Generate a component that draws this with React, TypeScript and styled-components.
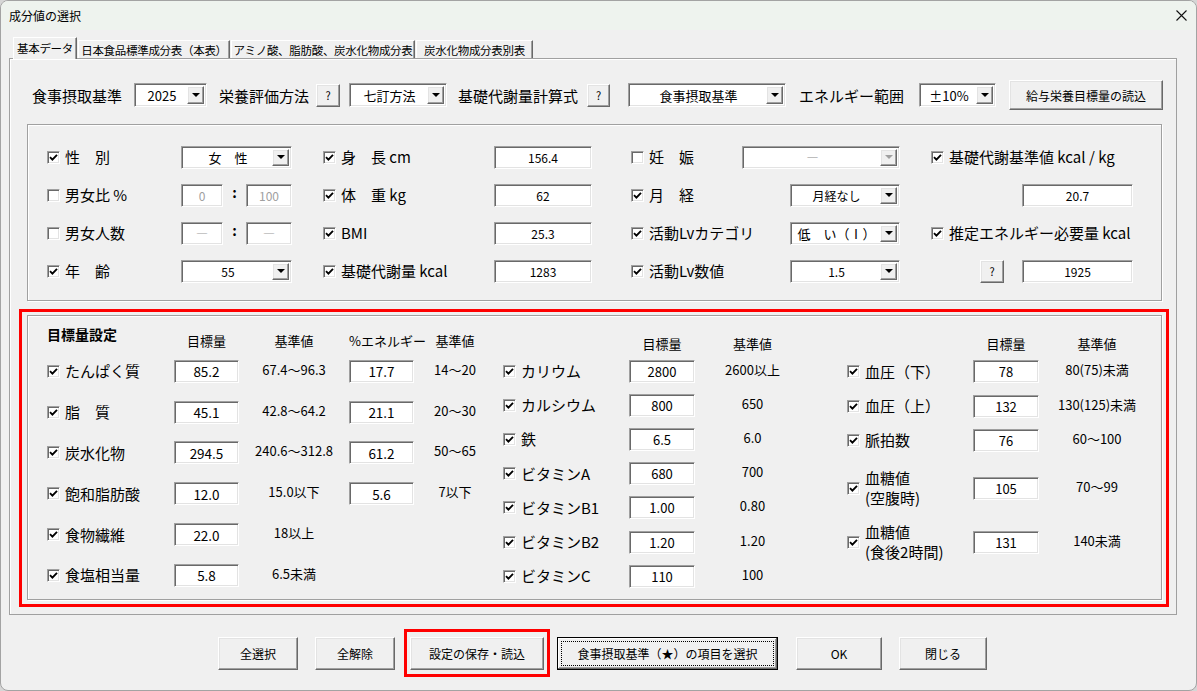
import React from "react";
import styled, { createGlobalStyle, css } from "styled-components";

const GlobalStyle = createGlobalStyle`
  html, body {
    margin: 0;
    padding: 0;
    background: #d6d6d6;
  }
  body {
    font-family: "Noto Sans CJK JP", "Noto Sans", sans-serif;
    color: #000;
  }
  * {
    box-sizing: border-box;
  }
`;

const raised = css`
  background: #f0f0f0;
  border: 1px solid;
  border-color: #fff #696969 #696969 #fff;
  box-shadow: inset -1px -1px 0 #a0a0a0, inset 1px 1px 0 #e3e3e3;
`;

const sunken = css`
  background: #fff;
  border: 1px solid;
  border-color: #a0a0a0 #fff #fff #a0a0a0;
  box-shadow: inset 1px 1px 0 #696969, inset -1px -1px 0 #e3e3e3;
`;

const Window = styled.div`
  width: 1197px;
  height: 691px;
  background: #f0f0f0;
  border: 1px solid #a3a3a3;
  border-radius: 8px;
  overflow: hidden;
  display: flex;
  flex-direction: column;
`;

const TitleBar = styled.div`
  height: 29px;
  flex: none;
  background: #eef3ee;
  display: flex;
  align-items: center;
  justify-content: space-between;
  padding: 0 9px 0 8px;
  font-size: 12px;
`;

const Body = styled.div`
  padding: 7px 0 0 8px;
  display: flex;
  flex-direction: column;
`;

const TabStrip = styled.div`
  display: flex;
  align-items: flex-end;
  height: 21px;
  padding-left: 4px;
  position: relative;
  z-index: 1;
`;

const Tab = styled.div<{ $w: number; $active?: boolean }>`
  width: ${(p) => p.$w}px;
  height: ${(p) => (p.$active ? 22 : 18)}px;
  margin-bottom: ${(p) => (p.$active ? -1 : 0)}px;
  margin-right: 1px;
  display: flex;
  align-items: center;
  justify-content: center;
  padding-bottom: ${(p) => (p.$active ? 2 : 0)}px;
  font-size: 11.5px;
  letter-spacing: -0.3px;
  white-space: nowrap;
  background: #f0f0f0;
  border-top: 1px solid #fff;
  border-left: 1px solid #fff;
  border-right: 1px solid #696969;
  box-shadow: inset -1px 0 0 #a0a0a0;
`;

const TabPage = styled.div`
  width: 1168px;
  height: 557px;
  border: 1px solid #a0a0a0;
  box-shadow: inset 1px 1px 0 #fff;
  display: flex;
  flex-direction: column;
`;

const TopRow = styled.div`
  margin-top: 21px;
  padding-left: 22px;
  height: 30px;
  display: flex;
  align-items: center;
`;

const RowLabel = styled.div<{ $w: number; $ml?: number }>`
  width: ${(p) => p.$w}px;
  margin-left: ${(p) => p.$ml || 0}px;
  font-size: 15px;
  white-space: nowrap;
`;

const ComboBox = styled.div<{ $w?: number; $ml?: number; $h?: number; $col?: string; $fs?: number }>`
  ${sunken};
  width: ${(p) => (p.$w ? `${p.$w}px` : "auto")};
  height: ${(p) => p.$h || 23}px;
  margin-left: ${(p) => p.$ml || 0}px;
  grid-column: ${(p) => p.$col || "auto"};
  display: flex;
  align-items: stretch;
  padding: 2px;
  font-size: ${(p) => p.$fs || 12}px;
`;

const ComboText = styled.div<{ $off?: boolean }>`
  flex: 1;
  display: flex;
  align-items: center;
  justify-content: center;
  color: ${(p) => (p.$off ? "#8a8a8a" : "#000")};
  white-space: nowrap;
`;

const ComboArrow = styled.div<{ $off?: boolean }>`
  ${raised};
  width: 17px;
  flex: none;
  display: flex;
  align-items: center;
  justify-content: center;

  &::after {
    content: "";
    border-left: 4px solid transparent;
    border-right: 4px solid transparent;
    border-top: 4px solid ${(p) => (p.$off ? "#a0a0a0" : "#000")};
  }
`;

const Field = styled.div<{ $w?: number; $col?: string; $fs?: number; $off?: boolean }>`
  ${sunken};
  width: ${(p) => (p.$w ? `${p.$w}px` : "auto")};
  height: 23px;
  grid-column: ${(p) => p.$col || "auto"};
  display: flex;
  align-items: center;
  justify-content: center;
  font-size: ${(p) => p.$fs || 12}px;
  color: ${(p) => (p.$off ? "#a0a0a0" : "#000")};
`;

const Button = styled.div<{ $w: number; $h?: number; $ml?: number; $fs?: number }>`
  ${raised};
  width: ${(p) => p.$w}px;
  height: ${(p) => p.$h || 33}px;
  margin-left: ${(p) => p.$ml || 0}px;
  flex: none;
  display: flex;
  align-items: center;
  justify-content: center;
  font-size: ${(p) => p.$fs || 12}px;
  white-space: nowrap;
`;

const HelpButton = styled(Button)<{ $col?: string; $mr?: number }>`
  grid-column: ${(p) => p.$col || "auto"};
  justify-self: end;
  margin-right: ${(p) => p.$mr || 0}px;
  font-size: 11px;
`;

const DefaultButton = styled(Button)`
  border-color: #000;
  box-shadow: inset -1px -1px 0 #696969, inset 1px 1px 0 #fff, inset -2px -2px 0 #a0a0a0;
  padding: 3px;
`;

const Focus = styled.div`
  width: 100%;
  height: 100%;
  border: 1px dotted #000;
  display: flex;
  align-items: center;
  justify-content: center;
`;

const Panel = styled.div`
  width: 1135px;
  border: 1px solid #a0a0a0;
  box-shadow: inset 1px 1px 0 #fff, 1px 1px 0 #fff;
`;

const BasicPanel = styled(Panel)`
  margin: 14px 0 0 17px;
  height: 177px;
  padding: 13px 0 0 19px;
  display: grid;
  grid-template-columns: 134px 111px 31px 171px 98px 39px 111px 48px 110px 31px 91px 111px;
  grid-template-rows: repeat(4, 38px);
  align-items: center;
`;

const CheckRow = styled.div<{ $col?: string }>`
  grid-column: ${(p) => p.$col || "auto"};
  display: flex;
  align-items: center;
  gap: 5px;
  font-size: 15px;
  line-height: 20px;
  white-space: nowrap;
`;

const CheckBox = styled.div`
  ${sunken};
  width: 13px;
  height: 13px;
  flex: none;
  display: flex;
  align-items: center;
  justify-content: center;
`;

const Pair = styled.div<{ $col: string }>`
  grid-column: ${(p) => p.$col};
  display: flex;
  align-items: center;
  font-size: 14px;
`;

const Colon = styled.div`
  width: 23px;
  text-align: center;
  margin-top: -6px;
  font-weight: bold;
`;

const RedFrame = styled.div<{ $ml?: number }>`
  border: 3px solid #f00;
  margin-left: ${(p) => p.$ml || 0}px;
  flex: none;
`;

const TargetFrame = styled(RedFrame)`
  margin-top: 8px;
  width: 1150px;
  height: 298px;
  padding: 3px 4px 4px 5px;
`;

const TargetPanel = styled(Panel)`
  height: 285px;
  display: flex;
  align-items: flex-start;
  padding: 8px 0 0 19px;
`;

const Section = styled.div<{ $cols: string; $rows: string; $ml?: number }>`
  margin-left: ${(p) => p.$ml || 0}px;
  display: grid;
  grid-template-columns: ${(p) => p.$cols};
  grid-template-rows: ${(p) => p.$rows};
  align-items: center;
`;

const SectionTitle = styled.div`
  grid-column: 1;
  align-self: start;
  margin-top: 3px;
  font-size: 14px;
  font-weight: bold;
  line-height: 15px;
`;

const ColHead = styled.div<{ $col: number }>`
  grid-column: ${(p) => p.$col};
  align-self: end;
  padding-bottom: 3px;
  text-align: center;
  font-size: 13px;
  line-height: 14px;
  white-space: nowrap;
`;

const RefValue = styled.div`
  text-align: center;
  font-size: 13px;
  margin-top: -4px;
  white-space: nowrap;
`;

const TwoLine = styled.div`
  display: flex;
  flex-direction: column;
  line-height: 20px;
`;

const ButtonRow = styled.div`
  margin-top: 14px;
  height: 48px;
  display: flex;
  align-items: center;
`;

const SaveFrame = styled(RedFrame)`
  padding: 4px 3px;
  height: 48px;
  display: flex;
  align-items: center;
`;

const Tick = () => (
  <svg width="9" height="9" viewBox="0 0 9 9">
    <path d="M1 4.2 L3.4 6.6 L8 1.8" stroke="#000" strokeWidth="1.9" fill="none" />
  </svg>
);

function Check({
  label,
  on = true,
  col,
}: {
  label: React.ReactNode;
  on?: boolean;
  col?: string;
}) {
  return (
    <CheckRow $col={col}>
      <CheckBox>{on && <Tick />}</CheckBox>
      <span>{label}</span>
    </CheckRow>
  );
}

function Combo({
  value,
  w,
  ml,
  h,
  col,
  fs,
  off,
}: {
  value: string;
  w?: number;
  ml?: number;
  h?: number;
  col?: string;
  fs?: number;
  off?: boolean;
}) {
  return (
    <ComboBox $w={w} $ml={ml} $h={h} $col={col} $fs={fs}>
      <ComboText $off={off}>{value}</ComboText>
      <ComboArrow $off={off} />
    </ComboBox>
  );
}

const leftRows = [
  { label: "たんぱく質", v: "85.2", ref: "67.4～96.3", e: "17.7", eref: "14～20" },
  { label: "脂　質", v: "45.1", ref: "42.8～64.2", e: "21.1", eref: "20～30" },
  { label: "炭水化物", v: "294.5", ref: "240.6～312.8", e: "61.2", eref: "50～65" },
  { label: "飽和脂肪酸", v: "12.0", ref: "15.0以下", e: "5.6", eref: "7以下" },
  { label: "食物繊維", v: "22.0", ref: "18以上" },
  { label: "食塩相当量", v: "5.8", ref: "6.5未満" },
];

const midRows = [
  { label: "カリウム", v: "2800", ref: "2600以上" },
  { label: "カルシウム", v: "800", ref: "650" },
  { label: "鉄", v: "6.5", ref: "6.0" },
  { label: "ビタミンA", v: "680", ref: "700" },
  { label: "ビタミンB1", v: "1.00", ref: "0.80" },
  { label: "ビタミンB2", v: "1.20", ref: "1.20" },
  { label: "ビタミンC", v: "110", ref: "100" },
];

const rightRows: { label: React.ReactNode; v: string; ref: string }[] = [
  { label: "血圧（下）", v: "78", ref: "80(75)未満" },
  { label: "血圧（上）", v: "132", ref: "130(125)未満" },
  { label: "脈拍数", v: "76", ref: "60～100" },
  {
    label: (
      <TwoLine>
        <span>血糖値</span>
        <span>(空腹時)</span>
      </TwoLine>
    ),
    v: "105",
    ref: "70～99",
  },
  {
    label: (
      <TwoLine>
        <span>血糖値</span>
        <span>(食後2時間)</span>
      </TwoLine>
    ),
    v: "131",
    ref: "140未満",
  },
];

export default function App() {
  return (
    <>
      <GlobalStyle />
      <Window>
        <TitleBar>
          <span>成分値の選択</span>
          <svg width="11" height="11" viewBox="0 0 11 11">
            <path d="M0.5 0.5 L10.5 10.5 M10.5 0.5 L0.5 10.5" stroke="#111" strokeWidth="1.1" />
          </svg>
        </TitleBar>
        <Body>
          <TabStrip>
            <Tab $w={64} $active>
              基本データ
            </Tab>
            <Tab $w={152}>日本食品標準成分表（本表）</Tab>
            <Tab $w={184}>アミノ酸、脂肪酸、炭水化物成分表</Tab>
            <Tab $w={117}>炭水化物成分表別表</Tab>
          </TabStrip>
          <TabPage>
            <TopRow>
              <RowLabel $w={102}>食事摂取基準</RowLabel>
              <Combo value="2025" w={73} h={24} fs={13} />
              <RowLabel $w={97} $ml={12}>
                栄養評価方法
              </RowLabel>
              <Button $w={24} $h={23} $fs={11}>
                ?
              </Button>
              <Combo value="七訂方法" w={98} ml={9} h={24} fs={13} />
              <RowLabel $w={129} $ml={11}>
                基礎代謝量計算式
              </RowLabel>
              <Button $w={23} $h={23} $fs={11}>
                ?
              </Button>
              <Combo value="食事摂取基準" w={158} ml={18} h={24} fs={13} />
              <RowLabel $w={120} $ml={13}>
                エネルギー範囲
              </RowLabel>
              <Combo value="±10%" w={77} h={24} fs={13} />
              <Button $w={154} $h={30} $ml={13}>
                給与栄養目標量の読込
              </Button>
            </TopRow>

            <BasicPanel>
              <Check label="性　別" col="1" />
              <Combo value="女　性" col="2" fs={13} />
              <Check label="身　長 cm" col="4" />
              <Field $col="5">156.4</Field>
              <Check label="妊　娠" on={false} col="7" />
              <Combo value="―" col="8 / 10" off />
              <Check label="基礎代謝基準値 kcal / kg" col="11 / 13" />

              <Check label="男女比 %" on={false} col="1" />
              <Pair $col="2">
                <Field $w={42} $off>
                  0
                </Field>
                <Colon>:</Colon>
                <Field $w={46} $off>
                  100
                </Field>
              </Pair>
              <Check label="体　重 kg" col="4" />
              <Field $col="5">62</Field>
              <Check label="月　経" col="7 / 9" />
              <Combo value="月経なし" col="9" />
              <Field $col="12">20.7</Field>

              <Check label="男女人数" on={false} col="1" />
              <Pair $col="2">
                <Field $w={42} $off>
                  ―
                </Field>
                <Colon>:</Colon>
                <Field $w={46} $off>
                  ―
                </Field>
              </Pair>
              <Check label="BMI" col="4" />
              <Field $col="5">25.3</Field>
              <Check label="活動Lvカテゴリ" col="7 / 9" />
              <Combo value="低　い（Ⅰ）" col="9" fs={13} />
              <Check label="推定エネルギー必要量 kcal" col="11 / 13" />

              <Check label="年　齢" col="1" />
              <Combo value="55" col="2" />
              <Check label="基礎代謝量 kcal" col="4" />
              <Field $col="5">1283</Field>
              <Check label="活動Lv数値" col="7 / 9" />
              <Combo value="1.5" col="9" />
              <HelpButton $w={24} $h={23} $col="11" $mr={18}>
                ?
              </HelpButton>
              <Field $col="12">1925</Field>
            </BasicPanel>

            <TargetFrame $ml={9}>
              <TargetPanel>
                <Section $cols="127px 65px 110px 65px 82px" $rows="27px repeat(6, 40.8px)">
                  <SectionTitle>目標量設定</SectionTitle>
                  <ColHead $col={2}>目標量</ColHead>
                  <ColHead $col={3}>基準値</ColHead>
                  <ColHead $col={4}>%エネルギー</ColHead>
                  <ColHead $col={5}>基準値</ColHead>
                  {leftRows.map((r) => (
                    <React.Fragment key={r.label}>
                      <Check label={r.label} col="1" />
                      <Field $fs={13.5}>{r.v}</Field>
                      <RefValue>{r.ref}</RefValue>
                      {r.e && <Field $fs={13.5}>{r.e}</Field>}
                      {r.eref && <RefValue>{r.eref}</RefValue>}
                    </React.Fragment>
                  ))}
                </Section>

                <Section $ml={7} $cols="126px 66px 115px" $rows="30px repeat(7, 34.2px)">
                  <ColHead $col={2}>目標量</ColHead>
                  <ColHead $col={3}>基準値</ColHead>
                  {midRows.map((r) => (
                    <React.Fragment key={r.label}>
                      <Check label={r.label} col="1" />
                      <Field $fs={13}>{r.v}</Field>
                      <RefValue>{r.ref}</RefValue>
                    </React.Fragment>
                  ))}
                </Section>

                <Section $ml={37} $cols="126px 66px 116px" $rows="30px 35px 34px 34px 62px 46px">
                  <ColHead $col={2}>目標量</ColHead>
                  <ColHead $col={3}>基準値</ColHead>
                  {rightRows.map((r) => (
                    <React.Fragment key={r.v}>
                      <Check label={r.label} col="1" />
                      <Field $fs={13}>{r.v}</Field>
                      <RefValue>{r.ref}</RefValue>
                    </React.Fragment>
                  ))}
                </Section>
              </TargetPanel>
            </TargetFrame>
          </TabPage>

          <ButtonRow>
            <Button $w={80} $ml={209}>
              全選択
            </Button>
            <Button $w={80} $ml={17}>
              全解除
            </Button>
            <SaveFrame $ml={9}>
              <Button $w={134}>設定の保存・読込</Button>
            </SaveFrame>
            <DefaultButton $w={221} $ml={7}>
              <Focus>食事摂取基準（★）の項目を選択</Focus>
            </DefaultButton>
            <Button $w={86} $ml={18}>
              OK
            </Button>
            <Button $w={88} $ml={17}>
              閉じる
            </Button>
          </ButtonRow>
        </Body>
      </Window>
    </>
  );
}
